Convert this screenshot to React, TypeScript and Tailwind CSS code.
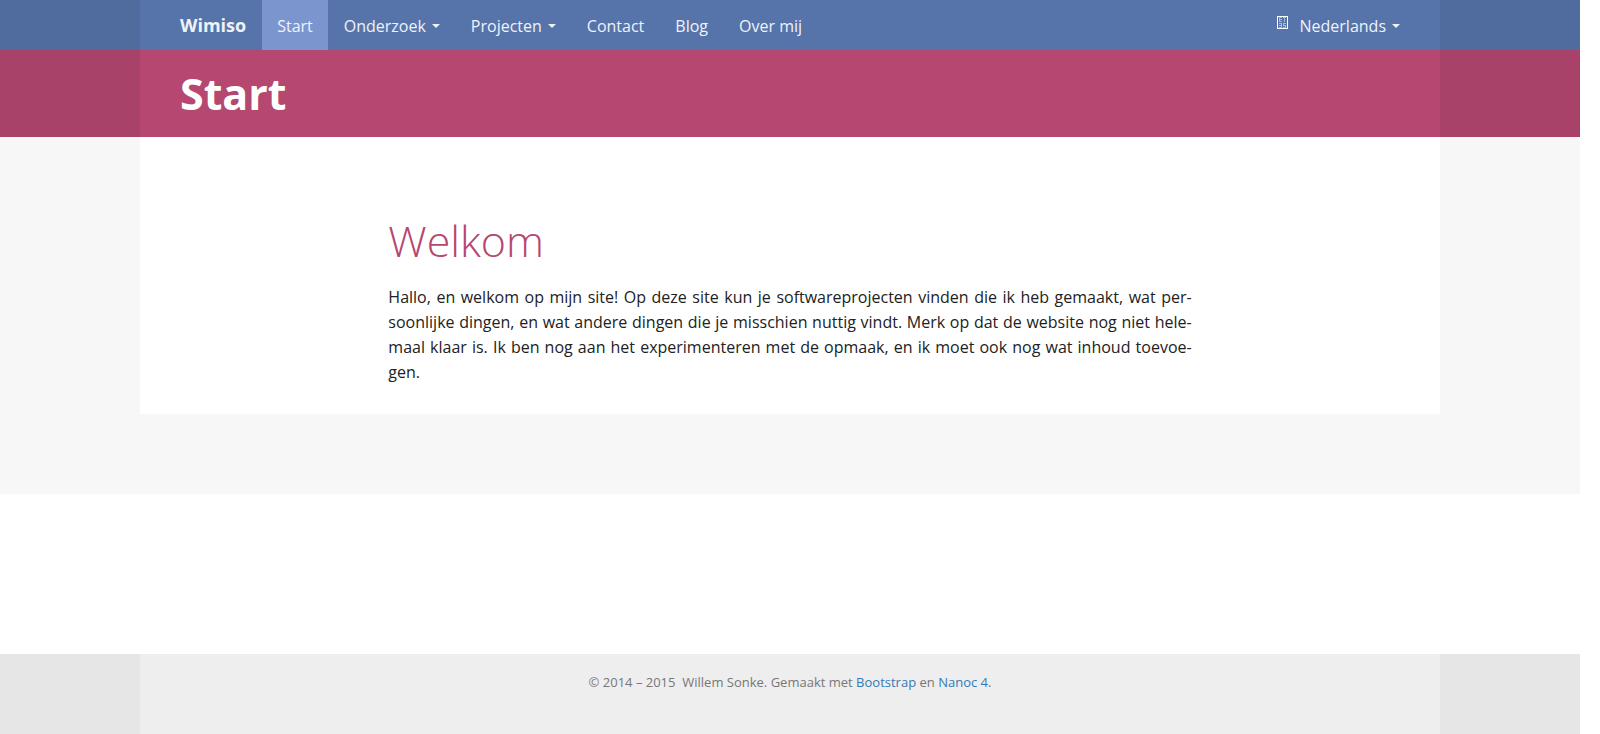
import { ReactNode } from "react";

interface NavItem {
  label: string;
  active?: boolean;
  dropdown?: boolean;
}

const navItems: NavItem[] = [
  { label: "Start", active: true },
  { label: "Onderzoek", dropdown: true },
  { label: "Projecten", dropdown: true },
  { label: "Contact" },
  { label: "Blog" },
  { label: "Over mij" },
];

function Caret() {
  return (
    <span className="ml-1.5 border-x-4 border-t-4 border-x-transparent border-t-current" />
  );
}

// Side margins get a darker shade than the centred column
function Band({
  outer,
  inner,
  children,
}: {
  outer: string;
  inner: string;
  children: ReactNode;
}) {
  return (
    <div className={`px-[140px] ${outer}`}>
      <div className={`px-10 ${inner}`}>{children}</div>
    </div>
  );
}

function GlyphBox() {
  return (
    <svg
      width="11"
      height="13"
      viewBox="0 0 11 13"
      shapeRendering="crispEdges"
      className="mb-2"
      aria-hidden="true"
    >
      <rect x="0.5" y="0.5" width="10" height="12" fill="none" stroke="#fff" />
      <g fill="#fff" fillOpacity="0.5">
        <path d="M2 1h3v1h-2v1h2v1h-2v1h2v1h-3z" />
        <path d="M6 1h3v1h-1v4h-1v-4h-1z" />
        <path d="M2 7h3v5h-3v-1h2v-1h-2v-1h2v-1h-2z" />
        <path d="M6 7h3v1h-2v1h2v3h-3v-1h2v-1h-2z" />
      </g>
    </svg>
  );
}

function Navbar() {
  return (
    <Band outer="bg-[#506c9e]" inner="bg-[#5674a9]">
      <nav className="flex h-[50px] items-stretch gap-px text-base text-[#eef2fb]">
        <a
          href="#"
          className="flex items-center pr-[15px] text-lg font-bold"
        >
          Wimiso
        </a>
        {navItems.map((item) =>
          item.dropdown ? (
            <button
              key={item.label}
              type="button"
              className="flex items-center px-[15px] pt-0.5"
            >
              {item.label}
              <Caret />
            </button>
          ) : (
            <a
              key={item.label}
              href="#"
              className={`flex items-center px-[15px] pt-0.5 ${
                item.active ? "bg-[#7b96cf]" : ""
              }`}
            >
              {item.label}
            </a>
          )
        )}
        <button type="button" className="ml-auto flex items-center pt-0.5">
          <GlyphBox />
          <span className="ml-3">Nederlands</span>
          <Caret />
        </button>
      </nav>
    </Band>
  );
}

export default function App() {
  return (
    <div
      lang="nl"
      className="mr-5 font-['Open_Sans',sans-serif] text-base text-[#222]"
    >
      <header>
        <Navbar />
        <Band outer="bg-[#a84268]" inner="bg-[#b54770]">
          <h1 className="pt-5 pb-[19px] text-[43px] leading-12 font-bold text-white">
            Start
          </h1>
        </Band>
      </header>

      <div className="bg-[#f7f7f7] pb-20">
        <Band outer="" inner="bg-white">
          <main className="grid grid-cols-12 gap-x-[30px] pt-20 pb-[29px]">
            <div className="col-span-8 col-start-3">
              <h2 className="mb-5 text-[43px] leading-12 font-light text-[#b54770]">
                Welkom
              </h2>
              <p className="text-justify leading-[25px] hyphens-manual">
                Hallo, en welkom op mijn site! Op deze site kun je
                softwareprojecten vinden die ik heb gemaakt, wat
                per&shy;soon&shy;lijke dingen, en wat andere dingen die je
                misschien nuttig vindt. Merk op dat de website nog niet
                hele&shy;maal klaar is. Ik ben nog aan het experimenteren met de
                opmaak, en ik moet ook nog wat inhoud toevoe&shy;gen.
              </p>
            </div>
          </main>
        </Band>
      </div>

      <footer className="mt-40">
        <Band outer="bg-[#e6e6e6]" inner="bg-[#eee]">
          <p className="h-20 pt-[18px] text-center text-[13px] leading-5 text-[#777]">
            © 2014 – 2015&nbsp; Willem Sonke. Gemaakt met{" "}
            <a href="#" className="text-[#337ab7]">
              Bootstrap
            </a>{" "}
            en{" "}
            <a href="#" className="text-[#337ab7]">
              Nanoc 4
            </a>
            .
          </p>
        </Band>
      </footer>
    </div>
  );
}
